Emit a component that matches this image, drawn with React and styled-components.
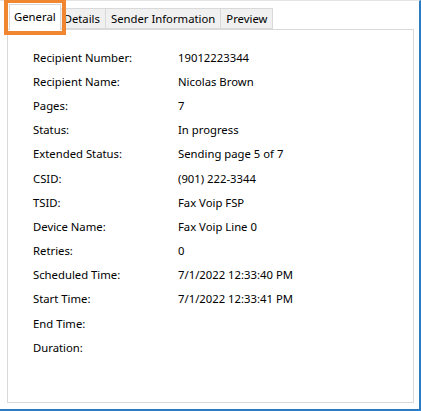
import React from "react";
import styled, { createGlobalStyle } from "styled-components";

const GlobalStyle = createGlobalStyle`
  html, body {
    margin: 0;
    padding: 0;
    background: #ffffff;
  }
  body {
    font-family: "Noto Sans", "Open Sans", sans-serif;
    font-size: 11.3px;
    color: #000;
  }
`;

const rows = [
  ["Recipient Number:", "19012223344"],
  ["Recipient Name:", "Nicolas Brown"],
  ["Pages:", "7"],
  ["Status:", "In progress"],
  ["Extended Status:", "Sending page 5 of 7"],
  ["CSID:", "(901) 222-3344"],
  ["TSID:", "Fax Voip FSP"],
  ["Device Name:", "Fax Voip Line 0"],
  ["Retries:", "0"],
  ["Scheduled Time:", "7/1/2022 12:33:40 PM"],
  ["Start Time:", "7/1/2022 12:33:41 PM"],
  ["End Time:", ""],
  ["Duration:", ""],
];

const tabs = ["General", "Details", "Sender Information", "Preview"];

const App = () => {
  return (
    <Window>
      <GlobalStyle />
      <TabStrip>
        {tabs.map((t, i) => (
          <Tab key={t} active={i === 0}>
            {t}
          </Tab>
        ))}
      </TabStrip>
      <Panel>
        <Grid>
          {rows.map(([label, value]) => (
            <React.Fragment key={label}>
              <Label>{label}</Label>
              <Value>{value}</Value>
            </React.Fragment>
          ))}
        </Grid>
      </Panel>
    </Window>
  );
};

export default App;

const Window = styled.div`
  width: 421px;
  height: 411px;
  box-sizing: border-box;
  background: #ffffff;
  border-top: 1px solid #e4e4e4;
  border-right: 2px solid #2b7cc4;
  border-bottom: 2px solid #2b7cc4;
  padding: 0 5px 6px 7px;
  display: flex;
  flex-direction: column;
`;

const TabStrip = styled.div`
  display: flex;
  align-items: flex-end;
  height: 29px;
  padding-left: 2px;
  position: relative;
  z-index: 1;
  margin-bottom: -1px;
`;

const Tab = styled.div`
  box-sizing: border-box;
  height: ${(p) => (p.active ? "26px" : "21px")};
  padding: ${(p) => (p.active ? "3px 4px 0" : "1px 5px 0 5px")};
  margin: ${(p) => (p.active ? "0 -2px 0 0" : "0 0 1px -1px")};
  background: ${(p) => (p.active ? "#ffffff" : "#f0f0f0")};
  border: 1px solid #d9d9d9;
  border-bottom: ${(p) => (p.active ? "none" : "1px solid #d9d9d9")};
  line-height: 17px;
  white-space: nowrap;
  position: relative;
  z-index: ${(p) => (p.active ? 2 : 1)};
  outline: ${(p) => (p.active ? "4px solid #f0862f" : "none")};
  outline-offset: ${(p) => (p.active ? "1px" : "0")};
`;

const Panel = styled.div`
  flex: 1;
  border: 1px solid #d9d9d9;
  background: #ffffff;
  padding: 15px 0 0 25px;
`;

const Grid = styled.div`
  display: grid;
  grid-template-columns: 145px 1fr;
  grid-auto-rows: 24.2px;
  align-items: center;
`;

const Label = styled.div`
  white-space: nowrap;
`;

const Value = styled.div`
  white-space: nowrap;
`;
